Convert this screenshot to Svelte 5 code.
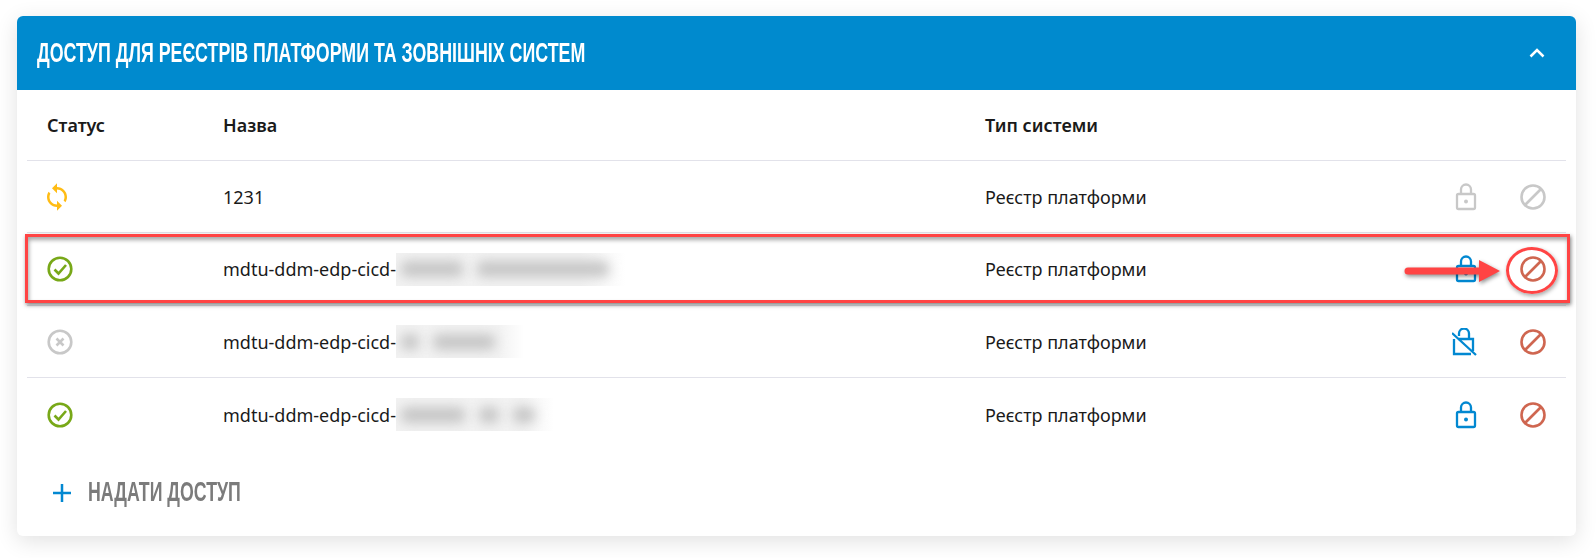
<script>
    let rows = [
        { status: 'sync', name: '1231', blur: 0, blobs: [], lock: 'off', ban: 'off' },
        { status: 'ok', name: 'mdtu-ddm-edp-cicd-', blur: 230, blobs: [62, 132], lock: 'on', ban: 'on', marked: true },
        { status: 'fail', name: 'mdtu-ddm-edp-cicd-', blur: 128, blobs: [18, 62], lock: 'open', ban: 'on' },
        { status: 'ok', name: 'mdtu-ddm-edp-cicd-', blur: 158, blobs: [64, 20, 22], lock: 'on', ban: 'on' }
    ];
</script>

<main>
    <section class="card">
        <header>
            <h2>ДОСТУП ДЛЯ РЕЄСТРІВ ПЛАТФОРМИ ТА ЗОВНІШНІХ СИСТЕМ</h2>
            <svg class="chevron" width="16" height="10" viewBox="0 0 16 10"><path d="M1.5 8.5 8 2l6.5 6.5" /></svg>
        </header>

        <div class="table">
            <div class="row head">
                <div>Статус</div>
                <div>Назва</div>
                <div>Тип системи</div>
            </div>

            {#each rows as row}
                <div class="row">
                    <div class="status">
                        {#if row.status == 'sync'}
                            <svg class="sync" width="30" height="30" viewBox="0 0 24 24"><path class="yellow" d="M12 4V1L8 5l4 4V6c3.31 0 6 2.69 6 6 0 1.01-.25 1.97-.7 2.8l1.46 1.46C19.54 15.03 20 13.57 20 12c0-4.42-3.58-8-8-8zm0 14c-3.31 0-6-2.69-6-6 0-1.01.25-1.97.7-2.8L5.24 7.74C4.46 8.97 4 10.43 4 12c0 4.42 3.58 8 8 8v3l4-4-4-4v3z" /></svg>
                        {:else if row.status == 'ok'}
                            <svg width="26" height="26" viewBox="0 0 26 26"><circle class="green" cx="13" cy="13" r="11.300" /><path class="green" d="m7.500 13.500 4 4 7.500-8.500" /></svg>
                        {:else}
                            <svg width="26" height="26" viewBox="0 0 26 26"><circle class="grey" cx="13" cy="13" r="11.300" /><path class="grey" d="m9.500 9.500 7 7m0-7-7 7" /></svg>
                        {/if}
                    </div>
                    <div class="name">
                        {row.name}{#if row.blur}<span class="smudge" style="width: {row.blur}px">{#each row.blobs as b}<i style="width: {b}px"></i>{/each}</span>{/if}
                    </div>
                    <div>Реєстр платформи</div>
                    <div class="lock" class:muted={row.lock == 'off'}>
                        {#if row.lock == 'open'}
                            <svg width="28" height="28" viewBox="0 0 28 28">
                                <path d="M7 8V5.500a5 5 0 0 1 10 0V11M2 11v15h17M6 11h15v12M0 5l24 22" />
                            </svg>
                        {:else}
                            <svg width="22" height="28" viewBox="0 0 22 28">
                                <rect x="2" y="11" width="18" height="15" rx="1.500" />
                                <path d="M6 11V6.500a5 5 0 0 1 10 0V11" />
                                <circle class="dot" cx="11" cy="18.500" r="2" />
                            </svg>
                        {/if}
                    </div>
                    <div class="ban" class:muted={row.ban == 'off'}>
                        <svg width="26" height="26" viewBox="0 0 26 26"><circle cx="13" cy="13" r="11.500" /><path d="M5 21 21 5" /></svg>
                    </div>

                    {#if row.marked}
                        <div class="mark"></div>
                        <div class="ring"></div>
                        <svg class="arrow" width="96" height="24" viewBox="0 0 96 24"><path d="M4 8.500h71V1l21 11-21 11v-7.500H4a3.500 3.500 0 0 1 0-7z" /></svg>
                    {/if}
                </div>
            {/each}
        </div>

        <button>
            <svg width="18" height="18" viewBox="0 0 18 18"><path d="M9 0v18M0 9h18" /></svg>
            <span>НАДАТИ ДОСТУП</span>
        </button>
    </section>
</main>

<style>
    :global(body) {
        background: #fff;
        font-family: "Noto Sans", sans-serif;
        color: #1a1a1a;
    }
    main {
        padding: 16px 20px 22px 17px;
    }
    .card {
        background: #fff;
        border-radius: 6px;
        box-shadow: 0 5px 22px rgba(0, 0, 0, 0.12);
        height: 520px;
    }
    header {
        height: 74px;
        background: #008ace;
        border-radius: 6px 6px 0 0;
        display: flex;
        align-items: center;
        justify-content: space-between;
        padding: 0 31px 0 20px;
    }
    h2 {
        margin: 0;
        color: #fff;
        font-family: "Liberation Sans", sans-serif;
        font-size: 27px;
        font-weight: 700;
        white-space: nowrap;
        transform: scaleX(0.66);
        transform-origin: left center;
    }
    .chevron path {
        fill: none;
        stroke: #fff;
        stroke-width: 2.5;
    }
    .table {
        padding: 0 10px;
    }
    .row {
        position: relative;
        box-sizing: border-box;
        display: grid;
        grid-template-columns: 176px 762px 1fr 67px 67px;
        align-items: center;
        height: 72.33px;
        padding: 1px 0 0 20px;
        border-bottom: 1px solid #e2e2ea;
        font-size: 18px;
    }
    .row:last-child {
        border-bottom: none;
    }
    .row.head {
        height: 71px;
        padding-top: 0;
        font-weight: 600;
    }
    .status svg {
        display: block;
    }
    .status .sync {
        margin-left: -5px;
    }
    .yellow {
        fill: #ffbc14;
    }
    .green, .grey {
        fill: none;
        stroke-width: 2.6;
    }
    .green {
        stroke: #78a818;
    }
    .grey {
        stroke: #c8c8c8;
    }
    .name {
        display: flex;
        align-items: center;
    }
    .smudge {
        display: flex;
        align-items: center;
        gap: 14px;
        box-sizing: border-box;
        height: 33px;
        padding-left: 5px;
        overflow: hidden;
        background: linear-gradient(90deg, #f2f2f2 80%, #fff);
    }
    .smudge i {
        display: block;
        height: 16px;
        border-radius: 6px;
        background: #c6c6c6;
        filter: blur(6px);
    }
    .lock, .ban {
        display: flex;
        justify-content: center;
    }
    .lock svg {
        fill: none;
        stroke: #0288d1;
        stroke-width: 2.3;
    }
    .lock .dot {
        fill: #0288d1;
        stroke: none;
    }
    .lock.muted svg {
        stroke: #c8c8c8;
    }
    .lock.muted .dot {
        fill: #c8c8c8;
    }
    .ban svg {
        fill: none;
        stroke: #cf6650;
        stroke-width: 2.6;
    }
    .ban.muted svg {
        stroke: #c8c8c8;
    }
    .mark {
        position: absolute;
        left: -2px;
        right: -4px;
        top: 1px;
        bottom: 2px;
        border: 3px solid #ff4444;
        box-shadow: 1px 2px 4px rgba(0, 0, 0, 0.5), inset 1px 3px 4px rgba(0, 0, 0, 0.35);
        pointer-events: none;
    }
    .ring {
        position: absolute;
        right: 8px;
        top: 14px;
        box-sizing: border-box;
        width: 52px;
        height: 47px;
        border: 3px solid #ff4444;
        border-radius: 50%;
        box-shadow: 1px 2px 4px rgba(0, 0, 0, 0.35);
    }
    .arrow {
        position: absolute;
        right: 66px;
        top: 26px;
        fill: #ff4444;
        filter: drop-shadow(1px 2px 2px rgba(0, 0, 0, 0.45));
    }
    button {
        display: flex;
        align-items: center;
        gap: 17px;
        margin: 27px 0 0 36px;
        padding: 0;
        border: none;
        background: none;
    }
    button svg {
        fill: none;
        stroke: #0288d1;
        stroke-width: 2.5;
    }
    button span {
        color: #7b7b7b;
        font-family: "Liberation Sans", sans-serif;
        font-size: 27px;
        font-weight: 700;
        transform: scaleX(0.657);
        transform-origin: left center;
    }
</style>
